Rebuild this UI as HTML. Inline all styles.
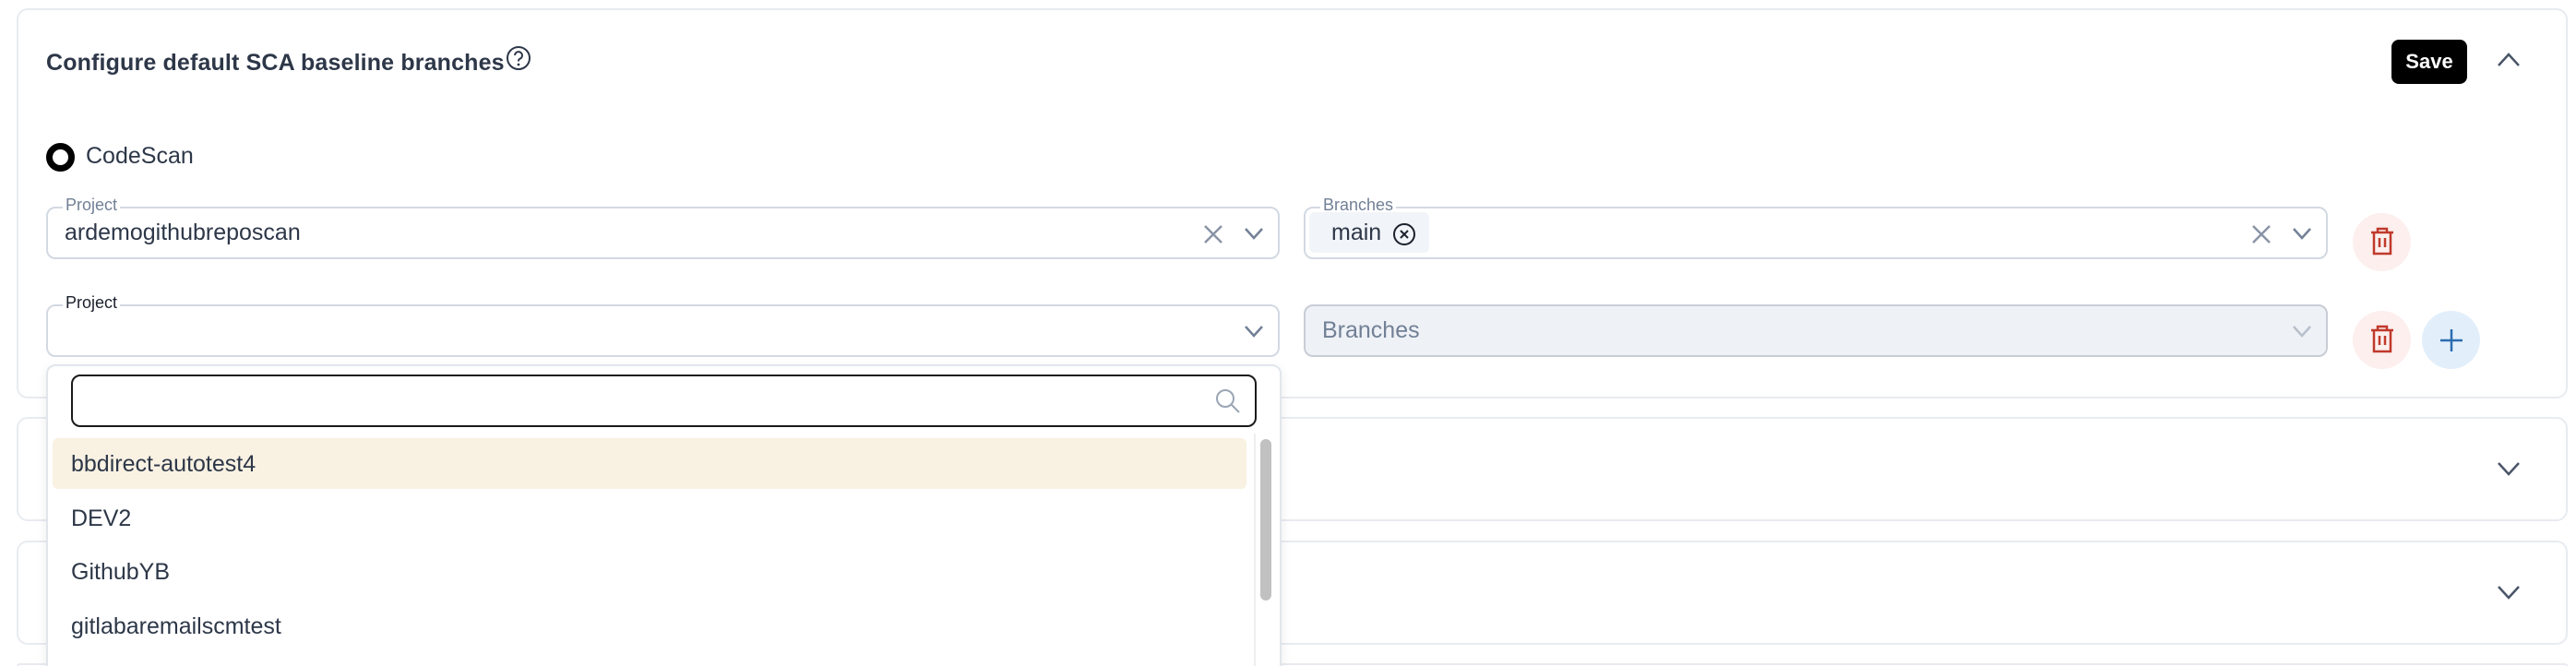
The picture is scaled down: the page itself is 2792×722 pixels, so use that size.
<!DOCTYPE html>
<html><head><style>
*{box-sizing:border-box;margin:0;padding:0}
html,body{width:2792px;height:722px;overflow:hidden}
body{background:#fff;font-family:"Liberation Sans",sans-serif;color:#2d3748}
#wrap{position:relative;width:2792px;height:722px;overflow:hidden}
.card{position:absolute;left:18px;right:9px;border:2px solid #e8ebf0;border-radius:12px;background:#fff}
.abs{position:absolute}
.field{position:absolute;border:2px solid #d3d9e3;border-radius:10px;background:#fff}
.lbl{position:absolute;top:-14px;left:16px;background:#fff;padding:0 3px;font-size:18px;color:#718096;line-height:20px}
.circ{position:absolute;width:63px;height:63px;border-radius:50%}
.opt{position:absolute;left:77px;font-size:25px;color:#2d3748}
</style></head><body><div id="wrap">
<div class="card" style="top:9px;height:423px"></div>
<div class="abs" style="left:50px;top:54px;font-size:25px;font-weight:bold;color:#2d3748;letter-spacing:0.15px">Configure default SCA baseline branches</div>
<svg class="abs" style="left:548px;top:49px" width="28" height="28" viewBox="0 0 28 28"><circle cx="14" cy="14" r="12" fill="none" stroke="#2d3748" stroke-width="2"/><path d="M10 11a4 4 0 1 1 5 4c-1 .5-1 1.2-1 2.5" fill="none" stroke="#2d3748" stroke-width="2"/><circle cx="14" cy="21" r="1.4" fill="#2d3748"/></svg>
<div class="abs" style="left:2592px;top:43px;width:82px;height:48px;background:#000;border-radius:8px;color:#fff;font-size:22px;font-weight:bold;text-align:center;line-height:48px">Save</div>
<svg class="abs" style="left:2705px;top:55px" width="28" height="20" viewBox="0 0 28 20"><path d="M3 16L14 4L25 16" fill="none" stroke="#4a5568" stroke-width="2.5"/></svg>
<div class="abs" style="left:50px;top:155px;width:31px;height:31px;border-radius:50%;border:7px solid #000"></div>
<div class="abs" style="left:93px;top:155px;font-size:25px;color:#2d3748">CodeScan</div>

<div class="field" style="left:50px;top:224px;width:1337px;height:57px"><span class="lbl">Project</span>
<div class="abs" style="left:18px;top:12px;font-size:25px">ardemogithubreposcan</div>
<svg class="abs" style="right:58px;top:16px" width="24" height="24" viewBox="0 0 24 24"><path d="M3 3L21 21M21 3L3 21" stroke="#8a94a6" stroke-width="2.5"/></svg>
<svg class="abs" style="right:14px;top:18px" width="24" height="18" viewBox="0 0 24 18"><path d="M3 4L12 14L21 4" fill="none" stroke="#718096" stroke-width="2.5"/></svg></div>

<div class="field" style="left:1413px;top:224px;width:1110px;height:57px"><span class="lbl">Branches</span>
<div class="abs" style="left:4px;top:4px;width:130px;height:44px;background:#f1f4f8;border-radius:6px"></div>
<div class="abs" style="left:28px;top:12px;font-size:25px">main</div>
<svg class="abs" style="left:94px;top:15px" width="26" height="26" viewBox="0 0 26 26"><circle cx="13" cy="13" r="11" fill="none" stroke="#1a202c" stroke-width="2"/><path d="M9 9L17 17M17 9L9 17" stroke="#1a202c" stroke-width="2"/></svg>
<svg class="abs" style="right:58px;top:16px" width="24" height="24" viewBox="0 0 24 24"><path d="M3 3L21 21M21 3L3 21" stroke="#8a94a6" stroke-width="2.5"/></svg>
<svg class="abs" style="right:14px;top:18px" width="24" height="18" viewBox="0 0 24 18"><path d="M3 4L12 14L21 4" fill="none" stroke="#718096" stroke-width="2.5"/></svg></div>

<div class="circ" style="left:2550px;top:231px;background:#fcefee"></div>
<svg class="abs" style="left:2567px;top:246px" width="30" height="32" viewBox="0 0 30 32"><path d="M3 6H27M10 6V2H20V6M6 6V29H24V6M12 12V22M18 12V22" fill="none" stroke="#c0392b" stroke-width="2.5"/></svg>

<div class="field" style="left:50px;top:330px;width:1337px;height:57px"><span class="lbl" style="color:#1a202c">Project</span>
<svg class="abs" style="right:14px;top:18px" width="24" height="18" viewBox="0 0 24 18"><path d="M3 4L12 14L21 4" fill="none" stroke="#718096" stroke-width="2.5"/></svg></div>
<div class="field" style="left:1413px;top:330px;width:1110px;height:57px;background:#eef1f6;border-color:#c8cdd5">
<div class="abs" style="left:18px;top:12px;font-size:25px;color:#718096">Branches</div>
<svg class="abs" style="right:14px;top:18px" width="24" height="18" viewBox="0 0 24 18"><path d="M3 4L12 14L21 4" fill="none" stroke="#b8c0cc" stroke-width="2.5"/></svg></div>
<div class="circ" style="left:2550px;top:337px;background:#fcefee"></div>
<svg class="abs" style="left:2567px;top:352px" width="30" height="32" viewBox="0 0 30 32"><path d="M3 6H27M10 6V2H20V6M6 6V29H24V6M12 12V22M18 12V22" fill="none" stroke="#c0392b" stroke-width="2.5"/></svg>
<div class="circ" style="left:2625px;top:337px;background:#e2effb"></div>
<svg class="abs" style="left:2642px;top:354px" width="30" height="30" viewBox="0 0 30 30"><path d="M15 3V27M3 15H27" stroke="#2b6cb0" stroke-width="2.5"/></svg>

<div class="card" style="top:452px;height:113px"></div>
<svg class="abs" style="left:2705px;top:498px" width="28" height="20" viewBox="0 0 28 20"><path d="M3 4L14 16L25 4" fill="none" stroke="#4a5568" stroke-width="2.5"/></svg>
<div class="card" style="top:586px;height:113px"></div>
<svg class="abs" style="left:2705px;top:632px" width="28" height="20" viewBox="0 0 28 20"><path d="M3 4L14 16L25 4" fill="none" stroke="#4a5568" stroke-width="2.5"/></svg>
<div class="card" style="top:719px;height:3px;border-bottom:none;border-radius:12px 12px 0 0"></div>

<div class="abs" style="left:50px;top:395px;width:1339px;height:327px;background:#fff;border:2px solid #e2e6ec;border-bottom:none;border-radius:10px 10px 0 0;box-shadow:0 4px 12px rgba(0,0,0,.08)"></div>
<div class="abs" style="left:77px;top:406px;width:1285px;height:57px;border:2px solid #1a1a1a;border-radius:10px"></div>
<svg class="abs" style="left:1316px;top:420px" width="30" height="30" viewBox="0 0 30 30"><circle cx="12" cy="12" r="9" fill="none" stroke="#9aa5b5" stroke-width="2"/><path d="M19 19L27 27" stroke="#9aa5b5" stroke-width="2"/></svg>
<div class="abs" style="left:57px;top:475px;width:1294px;height:55px;background:#f9f1e2;border-radius:6px"></div>
<div class="opt" style="top:489px">bbdirect-autotest4</div>
<div class="opt" style="top:548px">DEV2</div>
<div class="opt" style="top:606px">GithubYB</div>
<div class="opt" style="top:665px">gitlabaremailscmtest</div>
<div class="abs" style="left:1359px;top:470px;width:2px;height:252px;background:#eee"></div>
<div class="abs" style="left:1366px;top:476px;width:12px;height:175px;background:#c1c1c1;border-radius:6px"></div>
</div></body></html>
